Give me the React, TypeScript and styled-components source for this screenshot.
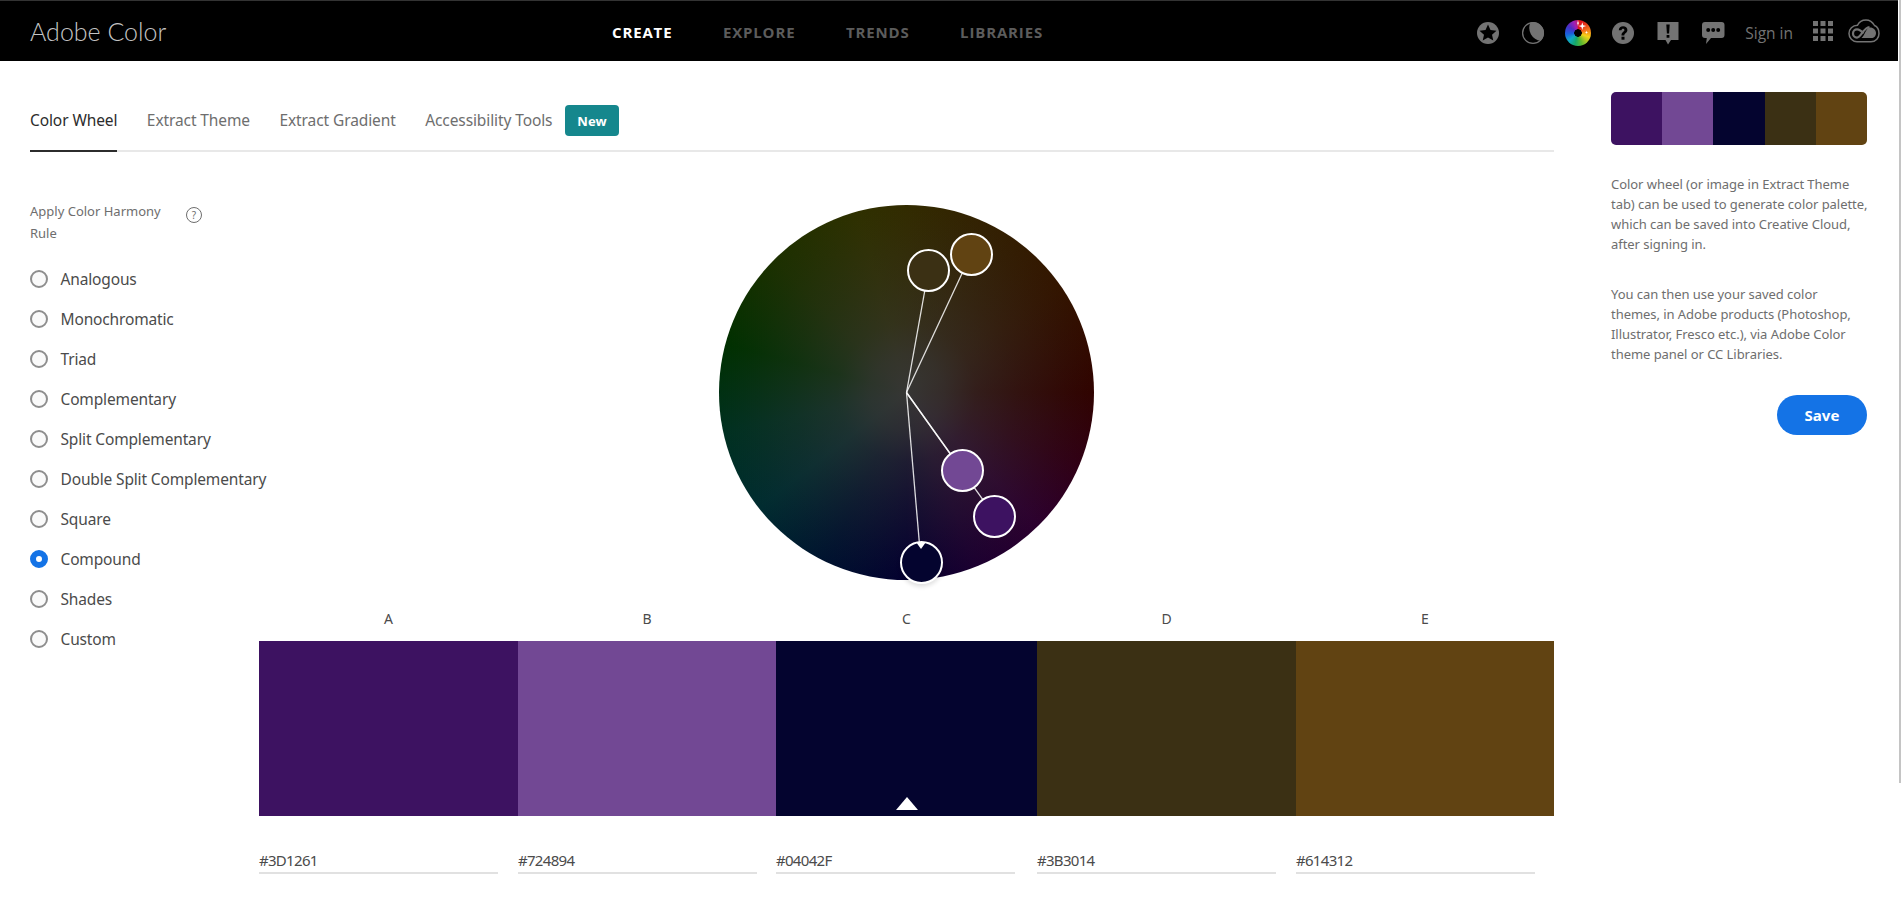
import React from "react";
import styled, { createGlobalStyle } from "styled-components";

const GlobalStyle = createGlobalStyle`
  html, body {
    margin: 0;
    padding: 0;
    height: 100%;
    overflow: hidden;
    background: #fff;
  }
  body {
    font-family: "Noto Sans", "Liberation Sans", sans-serif;
    color: #4b4b4b;
  }
  * {
    box-sizing: border-box;
  }
`;

const swatches = [
  { letter: "A", hex: "#3D1261", x: 275.5, y: 311 },
  { letter: "B", hex: "#724894", x: 243, y: 265 },
  { letter: "C", hex: "#04042F", x: 202, y: 357, base: true },
  { letter: "D", hex: "#3B3014", x: 209.5, y: 65 },
  { letter: "E", hex: "#614312", x: 252, y: 49.3 },
];

const rules = [
  "Analogous",
  "Monochromatic",
  "Triad",
  "Complementary",
  "Split Complementary",
  "Double Split Complementary",
  "Square",
  "Compound",
  "Shades",
  "Custom",
];

const CENTER = 187.5;

const StarIcon = () => (
  <svg width="24" height="24" viewBox="0 0 24 24">
    <circle cx="12" cy="12" r="11" fill="#737373" />
    <path d="M12 3.600l2.500 5.500 6 .6-4.500 4 1.300 5.900-5.300-3.100-5.300 3.100 1.300-5.900-4.500-4 6-.6z" fill="#000" />
  </svg>
);

const MoonIcon = () => (
  <svg width="24" height="24" viewBox="0 0 24 24">
    <circle cx="12" cy="12" r="10.400" fill="none" stroke="#737373" strokeWidth="1.300" />
    <path d="M9.500 1.300A11 11 0 0 1 19.800 19.800A13 13 0 0 1 9.500 1.300z" fill="#737373" />
  </svg>
);

const Sparkles = () => (
  <SparkleSvg viewBox="0 0 26 26">
    <path
      d="M17.300 2.200l.9 3 3 .9-3 .9-.9 3-.9-3-3-.9 3-.9z M13 0l.5 2.500 .7.6-.7.6-.5 2.500-.5-2.500-.7-.6.7-.6z M21.500 10.500l.4 1.500 1.500.4-1.500.4-.4 1.500-.4-1.500-1.500-.4 1.500-.4z"
      fill="#fff"
    />
  </SparkleSvg>
);

const HelpIcon = () => (
  <svg width="24" height="24" viewBox="0 0 24 24">
    <circle cx="12" cy="12" r="11" fill="#737373" />
    <path d="M7.800 9.300c0-2.600 1.900-4.100 4.300-4.100 2.500 0 4.300 1.500 4.300 3.700 0 3-3.100 3-3.100 5.600h-2.800c0-3.500 2.900-3.500 2.900-5.400 0-.9-.6-1.400-1.400-1.400-.9 0-1.400.6-1.500 1.600z" fill="#000" />
    <rect x="10.500" y="15.700" width="3" height="3" fill="#000" />
  </svg>
);

const AlertIcon = () => (
  <svg width="24" height="25" viewBox="0 0 24 25">
    <path d="M1.500 1h21v18H15l-3 4.500L9.500 19H1.500z" fill="#737373" />
    <path d="M10.300 3.500h3.400l-.6 9h-2.200z M10.600 14h2.800v2.800h-2.800z" fill="#000" />
  </svg>
);

const ChatIcon = () => (
  <svg width="24" height="25" viewBox="0 0 24 25">
    <path d="M4 1h16.500a3 3 0 0 1 3 3v10a3 3 0 0 1-3 3H10l-5 6 .8-6H4a3 3 0 0 1-3-3V4a3 3 0 0 1 3-3z" fill="#737373" />
    <circle cx="7.200" cy="9" r="2" fill="#000" />
    <circle cx="12.200" cy="9" r="2" fill="#000" />
    <circle cx="17.200" cy="9" r="2" fill="#000" />
  </svg>
);

const AppsIcon = () => (
  <svg width="20" height="20" viewBox="0 0 20 20" fill="#737373">
    {[0, 7.500, 15].map((y) =>
      [0, 7.500, 15].map((x) => <rect key={`${x}-${y}`} x={x} y={y} width="5" height="5" />)
    )}
  </svg>
);

const CloudIcon = () => (
  <svg width="32" height="24" viewBox="0 0 32 24" fill="none" stroke="#737373" strokeWidth="1.500">
    <path d="M9 22.800H23C28 22.800 31 19 31 14.500 31 10.500 29 7.500 26.500 6.500 24.500 3 21.500 1 18 1 14 1 11 3 9.500 6.300 4.500 6.300 1 10 1 14.500 1 19 4.500 22.800 9 22.800Z" />
    <path d="M15.500 14.500C13.500 12 12 10.400 9 10.400 6.800 10.400 5 12 5 14.500 5 16.700 6.500 18.600 9 18.600 13 18.600 15.500 8.500 21.500 8" strokeWidth="2.200" />
    <path d="M13.500 19H23.500C26 19 28 17 28 14 28 11 25.500 8.500 22 8.500 18 8.500 17 16.500 13.500 19Z" fill="#737373" stroke="none" />
  </svg>
);

export default function App() {
  return (
    <>
      <GlobalStyle />
      <Page>
        <Header>
          <Logo>Adobe Color</Logo>
          <Nav>
            <NavItem $active>CREATE</NavItem>
            <NavItem>EXPLORE</NavItem>
            <NavItem>TRENDS</NavItem>
            <NavItem>LIBRARIES</NavItem>
          </Nav>
          <Tools>
            <Tool><StarIcon /></Tool>
            <Tool><MoonIcon /></Tool>
            <Tool><ColorDisc><Sparkles /></ColorDisc></Tool>
            <Tool><HelpIcon /></Tool>
            <Tool><AlertIcon /></Tool>
            <Tool><ChatIcon /></Tool>
            <SignIn>Sign in</SignIn>
            <AppsSlot><AppsIcon /></AppsSlot>
            <CloudSlot><CloudIcon /></CloudSlot>
          </Tools>
        </Header>
        <Main>
          <Content>
            <TabBar>
              <Tab $active>Color Wheel</Tab>
              <Tab>Extract Theme</Tab>
              <Tab>Extract Gradient</Tab>
              <Tab>Accessibility Tools</Tab>
              <Badge>New</Badge>
            </TabBar>
            <Workspace>
              <Rules>
                <RulesTitle>
                  <span>
                    Apply Color Harmony
                    <br />
                    Rule
                  </span>
                  <HelpDot>?</HelpDot>
                </RulesTitle>
                {rules.map((rule) => (
                  <RuleRow key={rule}>
                    <Radio $checked={rule === "Compound"} />
                    {rule}
                  </RuleRow>
                ))}
              </Rules>
              <Editor>
                <Wheel>
                  <Spokes viewBox="0 0 375 375">
                    {swatches.map((s) => (
                      <line key={s.letter} x1={CENTER} y1={CENTER} x2={s.x} y2={s.y} />
                    ))}
                  </Spokes>
                  {swatches.map((s) => (
                    <Handle key={s.letter} $x={s.x} $y={s.y} $color={s.hex} $base={s.base} />
                  ))}
                </Wheel>
                <Grid>
                  {swatches.map((s) => (
                    <Letter key={s.letter}>{s.letter}</Letter>
                  ))}
                </Grid>
                <Grid>
                  {swatches.map((s) => (
                    <Swatch key={s.letter} $color={s.hex}>
                      {s.base && <BaseMark />}
                    </Swatch>
                  ))}
                </Grid>
                <Grid>
                  {swatches.map((s) => (
                    <HexField key={s.letter}>{s.hex}</HexField>
                  ))}
                </Grid>
              </Editor>
            </Workspace>
          </Content>
          <Aside>
            <MiniPalette>
              {swatches.map((s) => (
                <MiniColor key={s.letter} $color={s.hex} />
              ))}
            </MiniPalette>
            <Note>
              Color wheel (or image in Extract Theme
              <br />
              tab) can be used to generate color palette,
              <br />
              which can be saved into Creative Cloud,
              <br />
              after signing in.
            </Note>
            <Note>
              You can then use your saved color
              <br />
              themes, in Adobe products (Photoshop,
              <br />
              Illustrator, Fresco etc.), via Adobe Color
              <br />
              theme panel or CC Libraries.
            </Note>
            <SaveButton>Save</SaveButton>
          </Aside>
        </Main>
        <ScrollThumb />
      </Page>
    </>
  );
}

const Page = styled.div`
  position: relative;
  width: 1901px;
  height: 906px;
  overflow: hidden;
`;

const ScrollThumb = styled.div`
  position: absolute;
  top: 0;
  right: 0;
  width: 2px;
  height: 783px;
  background: #c4c4c4;
`;

const Header = styled.header`
  width: 1898px;
  height: 61px;
  background: #000;
  border-top: 1px solid #333;
  position: relative;
  display: flex;
  align-items: center;
  justify-content: space-between;
  padding: 0 18px 0 30px;
`;

const Logo = styled.div`
  font-family: "Lato", sans-serif;
  font-weight: 300;
  font-size: 25px;
  color: #c4c4c4;
`;

const Nav = styled.nav`
  position: absolute;
  left: 612px;
  top: 0;
  height: 62px;
  display: flex;
  align-items: center;
  gap: 50.500px;
`;

const NavItem = styled.a<{ $active?: boolean }>`
  font-family: "Open Sans", sans-serif;
  font-weight: 700;
  font-size: 15px;
  letter-spacing: 0.85px;
  color: ${(props) => (props.$active ? "#fff" : "#5c5c5c")};
`;

const Tools = styled.div`
  margin-top: 4px;
  display: flex;
  align-items: center;
  gap: 21px;
`;

const Tool = styled.div`
  width: 24px;
  height: 25px;
  display: flex;
  align-items: center;
  justify-content: center;
`;

const ColorDisc = styled.div`
  position: relative;
  width: 26px;
  height: 26px;
  flex: none;
  border-radius: 50%;
  background:
    radial-gradient(circle, #000 0 3.500px, transparent 4px),
    conic-gradient(#e0161c 20deg, #f2701b 70deg, #f6d318 110deg, #5fb92f 160deg, #14a86a 195deg, #10a9c4 230deg, #1b5fdc 265deg, #4a2ec4 305deg, #a01fb4 340deg, #e0161c 380deg);
`;

const SparkleSvg = styled.svg`
  position: absolute;
  inset: 0;
  width: 26px;
  height: 26px;
`;

const SignIn = styled.a`
  font-family: "Open Sans", sans-serif;
  font-size: 15.500px;
  margin: 0 -1px;
  color: #737373;
`;

const AppsSlot = styled.div`
  display: flex;
  margin-bottom: 4px;
`;

const CloudSlot = styled.div`
  display: flex;
  margin: 0 0 4px -6px;
`;

const Main = styled.main`
  display: grid;
  grid-template-columns: 1524px 256px;
  column-gap: 57px;
  padding-left: 30px;
`;

const Content = styled.div`
  min-width: 0;
`;

const TabBar = styled.div`
  margin-top: 44px;
  height: 47px;
  display: flex;
  align-items: flex-start;
  border-bottom: 2px solid #e8e8e8;
`;

const Tab = styled.a<{ $active?: boolean }>`
  height: 47px;
  line-height: 30px;
  margin-right: 29.500px;
  font-size: 15.500px;
  letter-spacing: -0.1px;
  white-space: nowrap;
  color: ${(props) => (props.$active ? "#2c2c2c" : "#6e6e6e")};
  border-bottom: 2px solid ${(props) => (props.$active ? "#2c2c2c" : "transparent")};
`;

const Badge = styled.span`
  width: 54px;
  height: 31px;
  margin-left: -17px;
  border-radius: 4px;
  background: #15878d;
  color: #fff;
  font-size: 13px;
  font-weight: 700;
  display: grid;
  place-items: center;
`;

const Workspace = styled.div`
  display: grid;
  grid-template-columns: 229px 1295px;
`;

const Rules = styled.div`
  padding-top: 48px;
`;

const RulesTitle = styled.div`
  width: 172px;
  margin-bottom: 15px;
  display: flex;
  justify-content: space-between;
  font-size: 13px;
  line-height: 22px;
  color: #6e6e6e;
`;

const HelpDot = styled.span`
  width: 16px;
  height: 16px;
  margin-top: 7px;
  border: 1px solid #6e6e6e;
  border-radius: 50%;
  font-size: 10px;
  line-height: 14px;
  text-align: center;
  flex: none;
`;

const RuleRow = styled.label`
  height: 40px;
  display: flex;
  align-items: center;
  gap: 12.500px;
  font-size: 15.500px;
  letter-spacing: -0.15px;
  white-space: nowrap;
  color: #4b4b4b;
`;

const Radio = styled.span<{ $checked?: boolean }>`
  width: 18px;
  height: 18px;
  flex: none;
  border-radius: 50%;
  border: ${(props) => (props.$checked ? "6px solid #1473e6" : "2px solid #8e8e8e")};
  background: ${(props) => (props.$checked ? "#fff" : "#fafafa")};
`;

const Editor = styled.div`
  padding-top: 53px;
`;

const Wheel = styled.div`
  position: relative;
  width: 375px;
  height: 375px;
  margin: 0 auto 29px;
  border-radius: 50%;
  background:
    radial-gradient(
      circle closest-side,
      rgba(54, 54, 52, 1) 0%,
      rgba(54, 54, 52, 0.8) 20%,
      rgba(54, 54, 52, 0.52) 37%,
      rgba(54, 54, 52, 0.3) 60%,
      rgba(54, 54, 52, 0.1) 85%,
      rgba(54, 54, 52, 0) 100%
    ),
    conic-gradient(
      #322b00 0deg,
      #332102 25deg,
      #331500 55deg,
      #300300 90deg,
      #300014 112deg,
      #2c002e 135deg,
      #1c0030 158deg,
      #04002f 180deg,
      #00122f 205deg,
      #002c30 232deg,
      #003020 258deg,
      #003000 285deg,
      #1c3000 315deg,
      #2f3000 345deg,
      #322b00 360deg
    );
`;

const Spokes = styled.svg`
  position: absolute;
  inset: 0;
  width: 375px;
  height: 375px;
  overflow: visible;

  line {
    stroke: #fff;
    stroke-width: 1.300;
    opacity: 0.85;
  }
`;

const Handle = styled.div<{ $x: number; $y: number; $color: string; $base?: boolean }>`
  position: absolute;
  left: ${(props) => props.$x - 21.5}px;
  top: ${(props) => props.$y - 21.5}px;
  width: 43px;
  height: 43px;
  border-radius: 50%;
  border: 2px solid #fff;
  background: ${(props) => props.$color};
  box-shadow: ${(props) => (props.$base ? "0 3px 4px rgba(0, 0, 0, 0.12)" : "none")};

  &::after {
    content: "";
    display: ${(props) => (props.$base ? "block" : "none")};
    width: 0;
    height: 0;
    margin: -1px auto 0;
    border-left: 5px solid transparent;
    border-right: 5px solid transparent;
    border-top: 7px solid #fff;
  }
`;

const Grid = styled.div`
  display: grid;
  grid-template-columns: 259px 258px 261px 259px 258px;
`;

const Letter = styled.div`
  height: 20px;
  margin-bottom: 12px;
  text-align: center;
  font-size: 14px;
  line-height: 20px;
  color: #4b4b4b;
`;

const Swatch = styled.div<{ $color: string }>`
  height: 175px;
  background: ${(props) => props.$color};
  display: flex;
  justify-content: center;
  align-items: flex-end;
`;

const BaseMark = styled.div`
  margin-bottom: 6px;
  width: 0;
  height: 0;
  border-left: 11px solid transparent;
  border-right: 11px solid transparent;
  border-bottom: 13px solid #fff;
`;

const HexField = styled.div`
  width: 239px;
  height: 26px;
  margin-top: 32px;
  font-size: 15px;
  letter-spacing: -0.7px;
  line-height: 24px;
  color: #4b4b4b;
  border-bottom: 2px solid #e1e1e1;
`;

const Aside = styled.aside`
  padding-top: 31px;
  display: flex;
  flex-direction: column;
`;

const MiniPalette = styled.div`
  height: 53px;
  margin-bottom: 29px;
  display: flex;
  border-radius: 5px;
  overflow: hidden;
`;

const MiniColor = styled.div<{ $color: string }>`
  flex: 1;
  background: ${(props) => props.$color};
`;

const Note = styled.p`
  margin: 0 0 30px;
  font-size: 13px;
  letter-spacing: -0.05px;
  line-height: 20px;
  white-space: nowrap;
  color: #6e6e6e;
`;

const SaveButton = styled.button`
  align-self: flex-end;
  width: 90px;
  height: 40px;
  margin-top: 1px;
  border: 0;
  border-radius: 20px;
  background: #1473e6;
  color: #fff;
  font-family: inherit;
  font-size: 15px;
  font-weight: 700;
`;
